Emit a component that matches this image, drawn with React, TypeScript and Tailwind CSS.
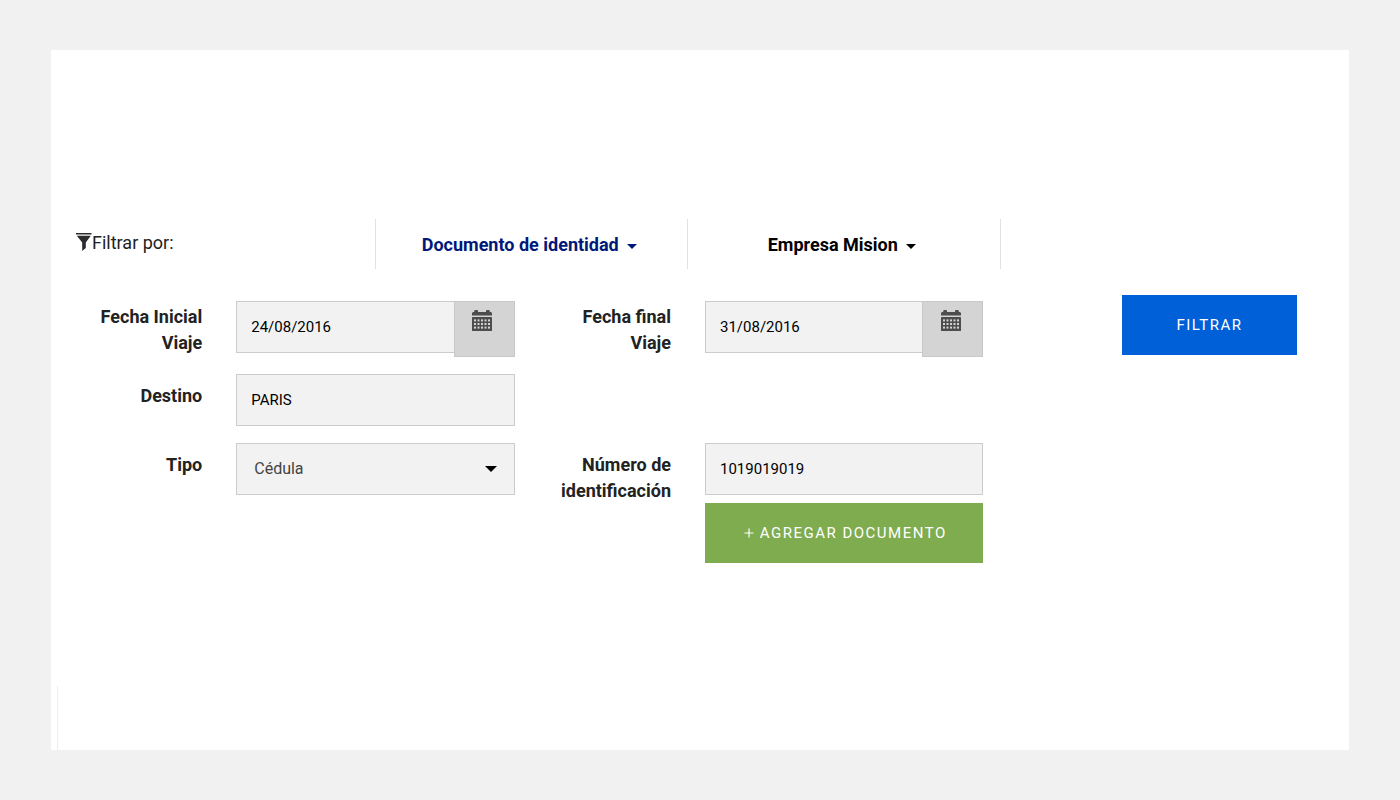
import React, { useState } from 'react';
import { Plus } from 'lucide-react';

const fieldClass =
  'block w-full h-[52px] border border-[#cccccc] bg-[#f2f2f2] px-[14px] text-[15px] text-black rounded-none outline-none focus:border-gray-500';

const labelClass = 'w-1/3 shrink-0 px-[17px] pt-[9px] text-right text-[18px] leading-[26px] font-bold text-[#222222]';

const FunnelIcon: React.FC = () => (
  <svg width="16" height="18" viewBox="0 0 16 18" fill="#2b2b2b" aria-hidden="true">
    <rect x="0" y="0" width="15.500" height="1.5" />
    <path d="M0.8 2.800h14L9.800 9.400v5.600L6.200 18V9.400z" />
  </svg>
);

const CalendarIcon: React.FC = () => (
  <svg width="20" height="21" viewBox="0 0 20 21" aria-hidden="true">
    <path fill="#4d4d4d" d="M2.200 1.200Q2.200 0 3.400 0H5Q6 0 6 1.200V2h8V1.200Q14 0 15 0h1.600q1.200 0 1.200 1.200V2H19l1 1v2.600H0V3l1-1h1.200z" />
    <rect x="0" y="7" width="20" height="14" rx="0.6" fill="#4d4d4d" />
    {[9.4, 13, 16.6].map((y) =>
      [2, 5.500, 9, 12.500, 16].map((x) => (
        <rect key={`${x}-${y}`} x={x} y={y} width="2" height="2" fill="#d4d4d4" />
      ))
    )}
  </svg>
);

const Caret: React.FC<{ className?: string; size?: number }> = ({ className = '', size = 10 }) => (
  <svg className={className} width={size} height={size / 2} viewBox="0 0 8 4" fill="currentColor" aria-hidden="true">
    <path d="M0 0h8L4 4z" />
  </svg>
);

const Field: React.FC<{ id: string; label: string; children: React.ReactNode }> = ({ id, label, children }) => (
  <div className="flex mb-[17px]">
    <label htmlFor={id} className={labelClass}>{label}</label>
    <div className="w-2/3 px-[17px]">{children}</div>
  </div>
);

interface DateInputProps {
  id: string;
  value: string;
  onChange: (value: string) => void;
}

const DateInput: React.FC<DateInputProps> = ({ id, value, onChange }) => (
  <div className="flex items-start pt-1.5">
    <input
      id={id}
      type="text"
      value={value}
      onChange={(e) => onChange(e.target.value)}
      className={`${fieldClass} flex-1 min-w-0 border-r-0`}
    />
    <button
      type="button"
      aria-label="Abrir calendario"
      className="flex w-[61px] h-[56px] shrink-0 justify-center border border-[#c8c8c8] bg-[#d4d4d4] pt-2 pr-1"
    >
      <CalendarIcon />
    </button>
  </div>
);

const App: React.FC = () => {
  const [tab, setTab] = useState('documento');
  const [startDate, setStartDate] = useState('24/08/2016');
  const [endDate, setEndDate] = useState('31/08/2016');
  const [destination, setDestination] = useState('PARIS');
  const [docType, setDocType] = useState('cedula');
  const [docNumber, setDocNumber] = useState('1019019019');

  const tabs = [
    { id: 'documento', label: 'Documento de identidad' },
    { id: 'empresa', label: 'Empresa Mision' },
  ];

  return (
    <div className="flex min-h-screen bg-[#f1f1f1] px-[51px] py-[50px] font-['Roboto',sans-serif]">
      <main className="flex flex-1 flex-col bg-white">
        <div className="mt-[169px] pl-3 pr-9">
          {/* Filter tabs */}
          <div className="grid grid-cols-4 h-[50px]">
            <div className="flex items-center border-r border-[#e2e2e2] pb-1 pl-[13px] text-[18px] text-[#222222]">
              <FunnelIcon />
              <span>Filtrar por:</span>
            </div>
            {tabs.map((t) => (
              <button
                key={t.id}
                type="button"
                onClick={() => setTab(t.id)}
                className={`flex items-center justify-center gap-2 border-r border-[#e2e2e2] pr-1 text-[18px] font-bold ${
                  tab === t.id ? 'text-[#00187a]' : 'text-black'
                }`}
              >
                {t.label}
                <Caret className="mt-1" />
              </button>
            ))}
          </div>

          {/* Filter form */}
          <form className="grid grid-cols-[3fr_3fr_2fr] items-start pt-[26px]" onSubmit={(e) => e.preventDefault()}>
            <Field id="fecha-inicial" label="Fecha Inicial Viaje">
              <DateInput id="fecha-inicial" value={startDate} onChange={setStartDate} />
            </Field>
            <Field id="fecha-final" label="Fecha final Viaje">
              <DateInput id="fecha-final" value={endDate} onChange={setEndDate} />
            </Field>
            <div className="flex justify-end pr-4">
              <button
                type="submit"
                className="h-[60px] w-[175px] bg-[#0060d8] text-[15px] tracking-widest text-white hover:bg-[#0052b8]"
              >
                FILTRAR
              </button>
            </div>

            <div className="col-start-1">
              <Field id="destino" label="Destino">
                <input
                  id="destino"
                  type="text"
                  value={destination}
                  onChange={(e) => setDestination(e.target.value)}
                  className={fieldClass}
                />
              </Field>
            </div>

            <div className="col-start-1">
              <Field id="tipo" label="Tipo">
                <div className="relative">
                  <select
                    id="tipo"
                    value={docType}
                    onChange={(e) => setDocType(e.target.value)}
                    className="block w-full h-[52px] appearance-none border border-[#cccccc] bg-[#f2f2f2] px-[17px] text-[16px] text-[#444444] rounded-none outline-none focus:border-gray-500"
                  >
                    <option value="cedula">Cédula</option>
                  </select>
                  <Caret size={12} className="pointer-events-none absolute right-[18px] top-[23px] text-black" />
                </div>
              </Field>
            </div>
            <Field id="numero" label="Número de identificación">
              <input
                id="numero"
                type="text"
                value={docNumber}
                onChange={(e) => setDocNumber(e.target.value)}
                className={fieldClass}
              />
              <button
                type="button"
                className="mt-2 flex h-[60px] w-full items-center justify-center gap-1 bg-[#7fac4e] text-[15px] tracking-widest text-white hover:bg-[#6f9a41]"
              >
                <Plus size={14} strokeWidth={2} />
                AGREGAR DOCUMENTO
              </button>
            </Field>
          </form>
        </div>

        <div className="mt-auto ml-1.5 h-16 border-l border-[#eeeeee]" />
      </main>
    </div>
  );
};

export default App;
